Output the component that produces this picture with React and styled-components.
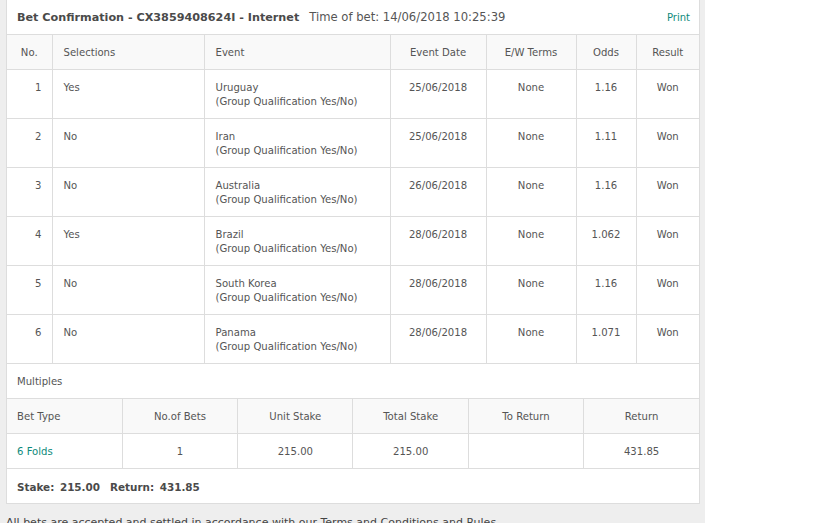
import React from "react";
import styled, { createGlobalStyle } from "styled-components";

const Global = createGlobalStyle`
  html, body { margin: 0; padding: 0; background: #fff; }
  body { font-family: "DejaVu Sans", Verdana, sans-serif; color: #555; }
`;

const Wrap = styled.div`
  width: 705px;
  box-sizing: border-box;
  padding-left: 6px;
  padding-right: 5px;
  background: #eee;
  min-height: 523px;
`;

const Panel = styled.div`
  margin-top: -1px;
  background: #fff;
  border: 1px solid #ddd;
`;

const TitleBar = styled.div`
  display: flex;
  align-items: center;
  height: 34px;
  padding: 0 9px 0 10px;
  border-bottom: 1px solid #ddd;
  font-size: 11px;
`;

const Title = styled.span`
  font-weight: bold;
  font-size: 11.2px;
  color: #4a4a4a;
  margin-right: 10px;
`;

const Time = styled.span`
  color: #555;
  font-size: 11.6px;
  flex: 1;
`;

const Link = styled.span`
  color: #0e8a7b;
  font-size: 10px;
`;

const Table = styled.table`
  width: 100%;
  border-collapse: collapse;
  table-layout: fixed;
  font-size: 10.1px;
  line-height: 14px;
`;

const Th = styled.th`
  font-weight: normal;
  background: #f9f9f9;
  color: #555;
  padding: 11px 10px 9px ${(p) => (p.$align === "left" ? "11px" : "10px")};
  text-align: ${(p) => p.$align || "center"};
  border-bottom: 1px solid #ddd;
  border-left: 1px solid #ddd;
  &:first-child { border-left: none; padding-left: 10px; }
  white-space: nowrap;
`;

const Td = styled.td`
  padding: 11px 10px 9px ${(p) => (p.$align === "left" ? "11px" : "10px")};
  vertical-align: top;
  text-align: ${(p) => p.$align || "center"};
  color: ${(p) => (p.$link ? "#0e8a7b" : "#555")};
  border-bottom: 1px solid #ddd;
  border-left: 1px solid #ddd;
  &:first-child { border-left: none; padding-left: 10px; }
  white-space: nowrap;
  height: 28px;
`;

const MultiTd = styled(Td)`
  height: 14px;
`;

const SectionRow = styled.div`
  padding: 11px 10px 9px;
  font-size: 10.1px;
  line-height: 14px;
  border-bottom: 1px solid #ddd;
`;

const Summary = styled.div`
  padding: 11px 10px 9px;
  font-size: 10.4px;
  line-height: 14px;
  font-weight: bold;
  color: #4a4a4a;
  word-spacing: 2px;
`;

const Gap = styled.span`
  display: inline-block;
  width: 10px;
`;

const Footer = styled.div`
  padding-top: 12px;
  font-size: 11px;
  color: #444;
  white-space: nowrap;
`;

const rows = [
  ["1", "Yes", "Uruguay", "25/06/2018", "1.16"],
  ["2", "No", "Iran", "25/06/2018", "1.11"],
  ["3", "No", "Australia", "26/06/2018", "1.16"],
  ["4", "Yes", "Brazil", "28/06/2018", "1.062"],
  ["5", "No", "South Korea", "28/06/2018", "1.16"],
  ["6", "No", "Panama", "28/06/2018", "1.071"],
];

export default function App() {
  return (
    <>
      <Global />
      <Wrap>
        <Panel>
          <TitleBar>
            <Title>Bet Confirmation - CX3859408624I - Internet</Title>
            <Time>Time of bet: 14/06/2018 10:25:39</Time>
            <Link>Print</Link>
          </TitleBar>
          <Table>
            <colgroup>
              <col style={{ width: 45 }} />
              <col style={{ width: 152 }} />
              <col style={{ width: 186 }} />
              <col style={{ width: 96 }} />
              <col style={{ width: 90 }} />
              <col style={{ width: 60 }} />
              <col />
            </colgroup>
            <thead>
              <tr>
                <Th>No.</Th>
                <Th $align="left">Selections</Th>
                <Th $align="left">Event</Th>
                <Th>Event Date</Th>
                <Th>E/W Terms</Th>
                <Th>Odds</Th>
                <Th>Result</Th>
              </tr>
            </thead>
            <tbody>
              {rows.map((r) => (
                <tr key={r[0]}>
                  <Td $align="right">{r[0]}</Td>
                  <Td $align="left">{r[1]}</Td>
                  <Td $align="left">
                    {r[2]}
                    <br />
                    (Group Qualification Yes/No)
                  </Td>
                  <Td>{r[3]}</Td>
                  <Td>None</Td>
                  <Td>{r[4]}</Td>
                  <Td>Won</Td>
                </tr>
              ))}
            </tbody>
          </Table>
          <SectionRow>Multiples</SectionRow>
          <Table>
            <thead>
              <tr>
                <Th $align="left">Bet Type</Th>
                <Th>No.of Bets</Th>
                <Th>Unit Stake</Th>
                <Th>Total Stake</Th>
                <Th>To Return</Th>
                <Th>Return</Th>
              </tr>
            </thead>
            <tbody>
              <tr>
                <MultiTd $align="left" $link>6 Folds</MultiTd>
                <MultiTd>1</MultiTd>
                <MultiTd>215.00</MultiTd>
                <MultiTd>215.00</MultiTd>
                <MultiTd></MultiTd>
                <MultiTd>431.85</MultiTd>
              </tr>
            </tbody>
          </Table>
          <Summary>
            Stake: 215.00<Gap />Return: 431.85
          </Summary>
        </Panel>
        <Footer>
          All bets are accepted and settled in accordance with our Terms and Conditions and Rules
        </Footer>
      </Wrap>
    </>
  );
}
